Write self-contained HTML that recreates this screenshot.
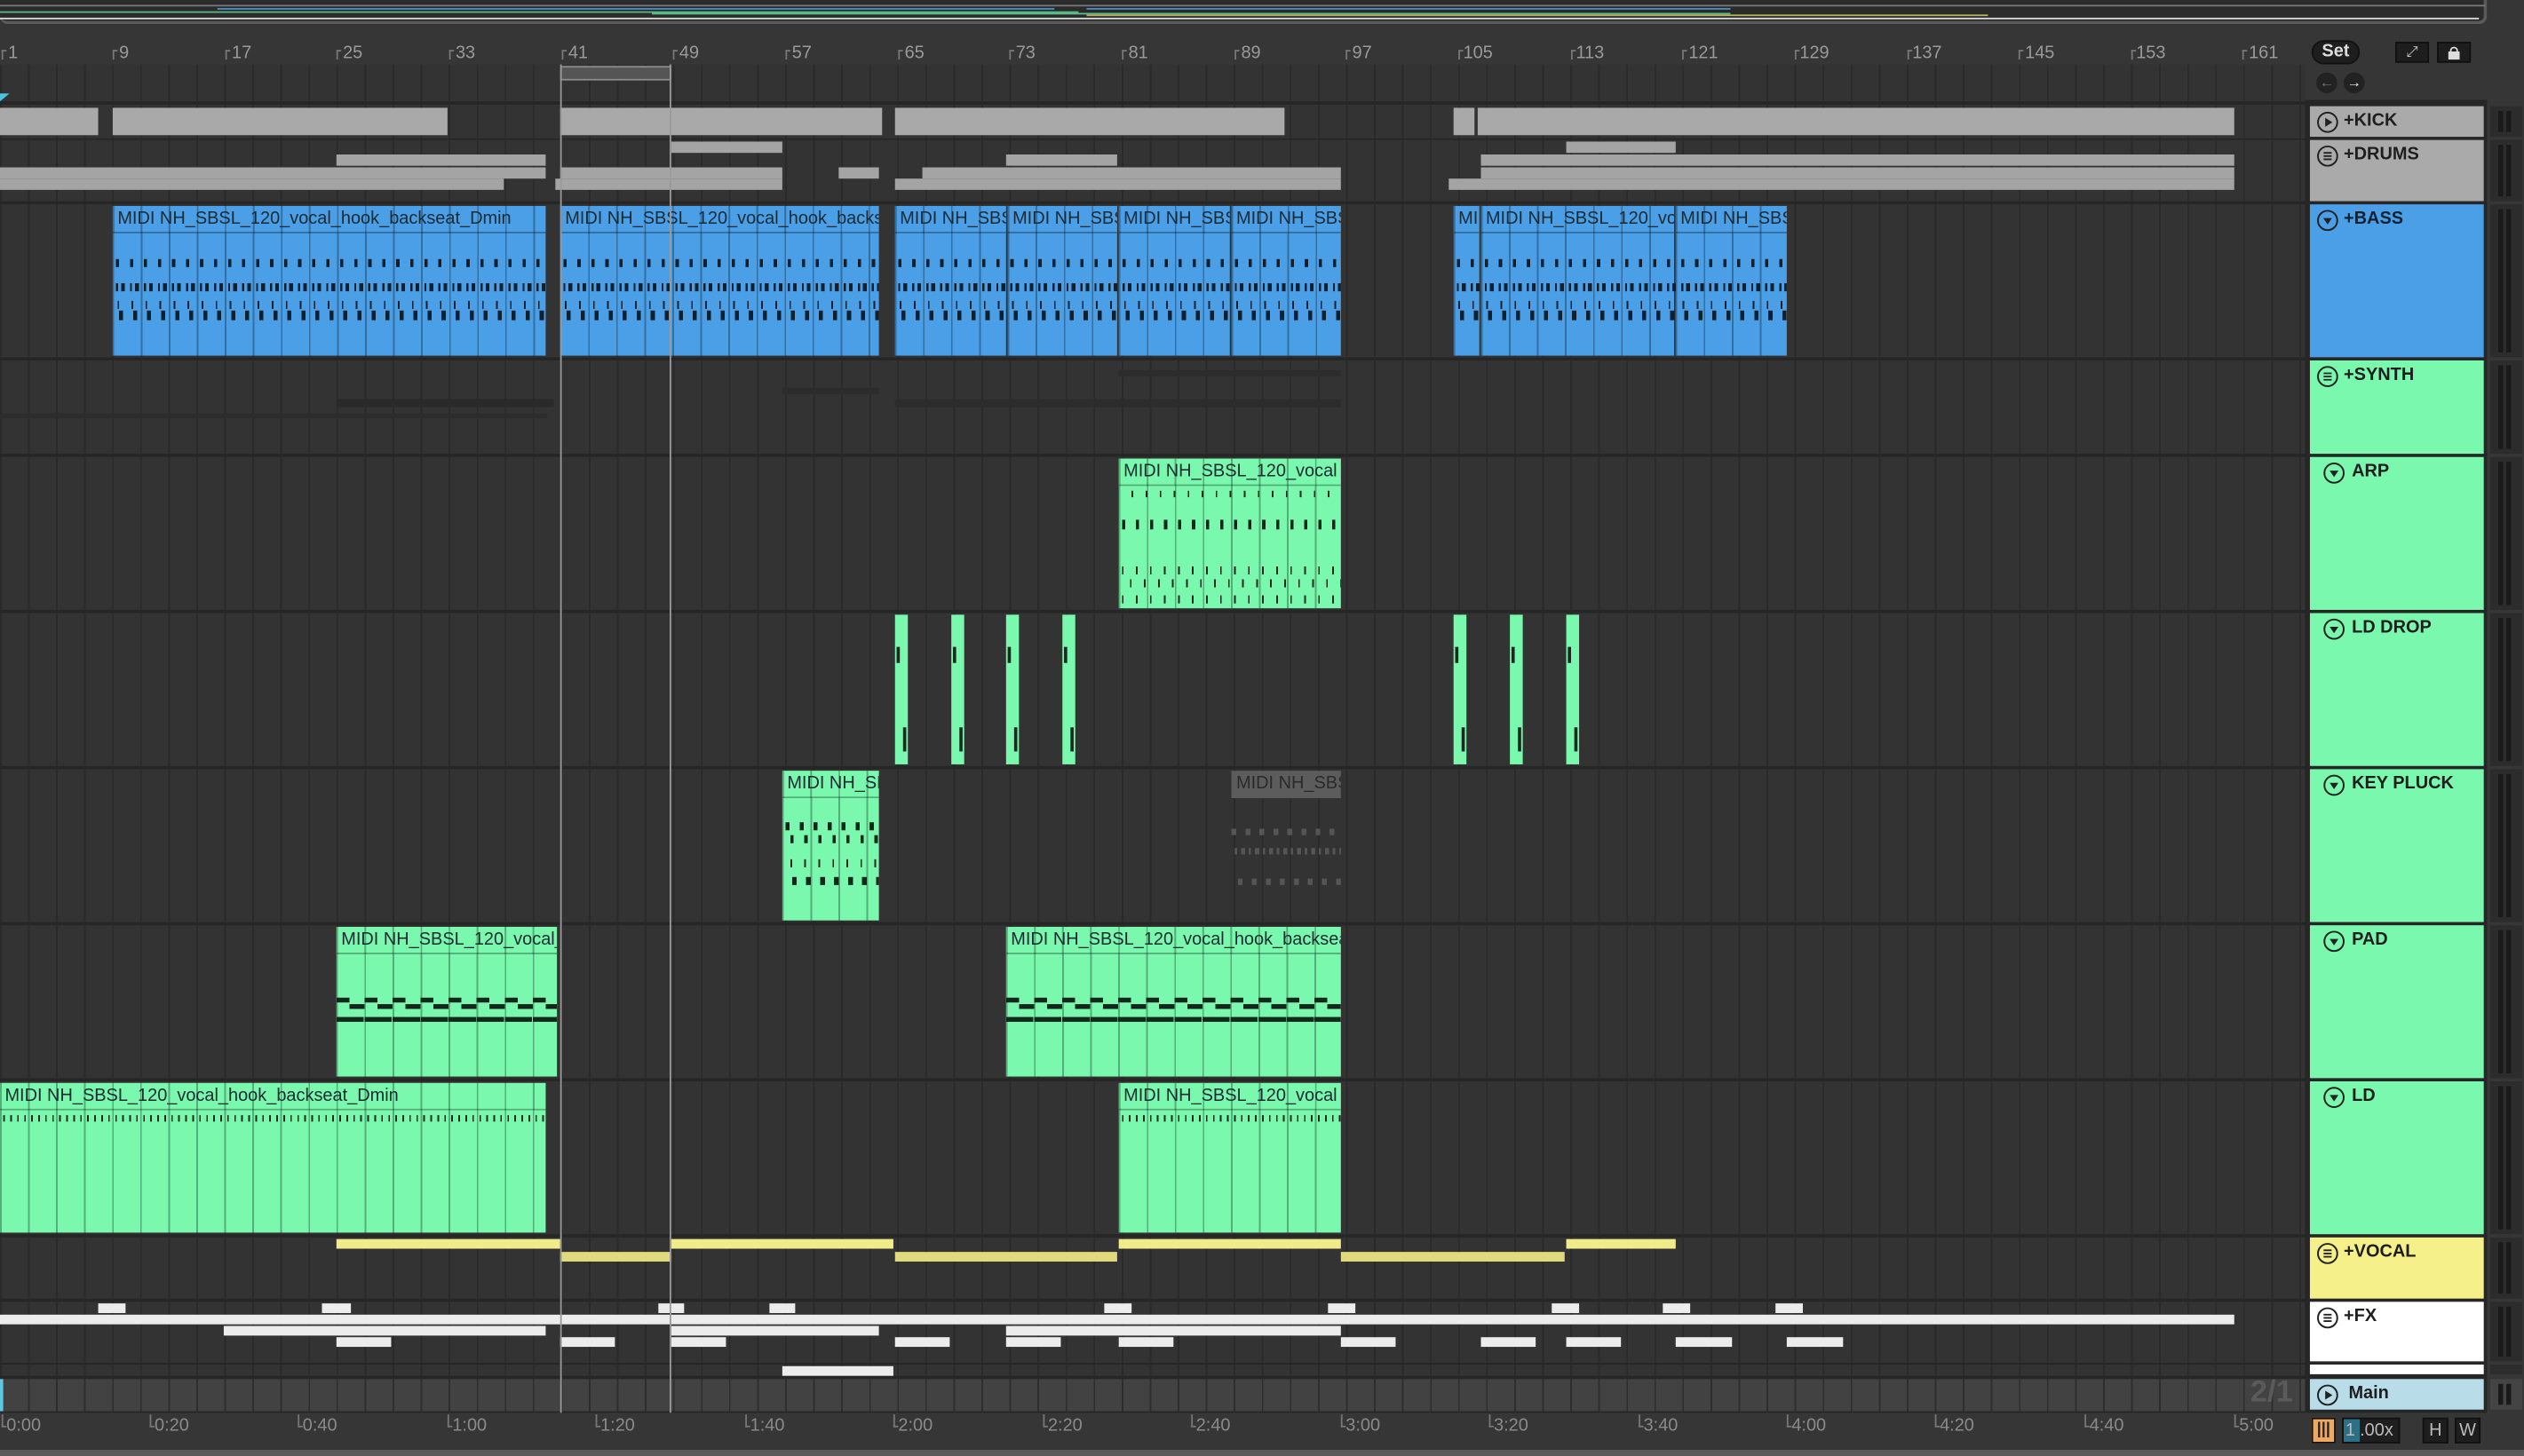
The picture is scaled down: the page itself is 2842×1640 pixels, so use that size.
<!DOCTYPE html>
<html><head><meta charset="utf-8"><style>
*{margin:0;padding:0;box-sizing:border-box}
html,body{width:2842px;height:1640px;overflow:hidden;background:#363636}
#s{position:absolute;left:0;top:0;width:1568px;height:905px;transform:scale(1.8125);transform-origin:0 0;font-family:"Liberation Sans",sans-serif;background:#363636}
.a{position:absolute}
.row{position:absolute;left:0;width:1432px;background:repeating-linear-gradient(90deg,#2a2a2a 0 1px,#333 1px 17.42px)}
.gr{position:absolute;background:#a9a9a9}
.g2{position:absolute;background:#a4a4a4;height:6.5px}
.clip{position:absolute;overflow:hidden;background-image:repeating-linear-gradient(90deg,rgba(0,0,0,.3) 0 1px,transparent 1px 17.42px)}
.b{background-color:#4a9fe6}
.gn{background-color:#7af8ad}
.t{position:absolute;left:0;top:0;right:0;height:17px;border-bottom:1px solid rgba(0,0,0,.3);font-size:11px;line-height:17px;padding-left:3px;color:#1a2a33;white-space:nowrap;overflow:hidden}
.b .t,.gn .t{background:inherit}
.nt{position:absolute;left:2px;right:0}
.rl{position:absolute;top:27px;font-size:11px;color:#9a9a9a}
.tk{position:absolute;top:31px;width:3px;height:6px;border-left:1px solid #777;border-top:1px solid #777}
.h{position:absolute;left:1435px;width:108px;font-size:11px;font-weight:bold;color:#1e1e1e}
.h svg{position:absolute;left:4px;top:3px}
.h .n{position:absolute;left:21px;top:3px}
.m{position:absolute;left:1547px;width:20px;background:#2c2c2c}
.m i{position:absolute;top:3px;bottom:3px;width:3px;background:#1a1a1a}
.y{position:absolute;background:#f1ec8a;height:6px}
.w{position:absolute;background:#ececec;height:5.5px}
.bt{position:absolute;top:880px;font-size:11px;color:#8a8a8a}
.bk{position:absolute;top:879px;width:3px;height:8px;border-left:1px solid #777;border-bottom:1px solid #777}
</style></head><body><div id="s">
<svg width="0" height="0" style="position:absolute"><defs>
<symbol id="pl" viewBox="0 0 14 14"><circle cx="7" cy="7" r="6" fill="none" stroke="#222" stroke-width="1.1"/><path d="M5.5 4.2 L10 7 L5.5 9.8Z" fill="#222"/></symbol>
<symbol id="mn" viewBox="0 0 14 14"><circle cx="7" cy="7" r="6" fill="none" stroke="#222" stroke-width="1.1"/><path d="M4.5 5h5M4.5 7h5M4.5 9h5" stroke="#222" stroke-width="1"/></symbol>
<symbol id="dn" viewBox="0 0 14 14"><circle cx="7" cy="7" r="6" fill="none" stroke="#222" stroke-width="1.1"/><path d="M4.3 5.5 L9.7 5.5 L7 9.5Z" fill="#222"/></symbol>
</defs></svg>

<!-- overview -->
<div class="a" style="left:0;top:0;width:1545px;height:15px;background:#2b2b2b;border-bottom:2px solid #5a5a5a;border-right:2px solid #5a5a5a;border-radius:0 0 5px 5px"></div>
<div class="a" style="left:0;top:3px;width:1544px;height:1px;background:#777"></div>
<div class="a" style="left:135px;top:5px;width:520px;height:1px;background:#4a8fcf"></div>
<div class="a" style="left:675px;top:5px;width:400px;height:1px;background:#4a8fcf"></div>
<div class="a" style="left:0;top:7px;width:670px;height:1px;background:#55b884"></div>
<div class="a" style="left:405px;top:8px;width:670px;height:1px;background:#55c08a"></div>
<div class="a" style="left:675px;top:9px;width:560px;height:1px;background:#b8b060"></div>
<div class="a" style="left:0;top:11px;width:1540px;height:1px;background:#ddd"></div>

<!-- ruler -->
<div class="tk" style="left:1px"></div><div class="rl" style="left:5px">1</div>
<div class="tk" style="left:70px"></div><div class="rl" style="left:74px">9</div>
<div class="tk" style="left:140px"></div><div class="rl" style="left:144px">17</div>
<div class="tk" style="left:209px"></div><div class="rl" style="left:213px">25</div>
<div class="tk" style="left:279px"></div><div class="rl" style="left:283px">33</div>
<div class="tk" style="left:349px"></div><div class="rl" style="left:353px">41</div>
<div class="tk" style="left:418px"></div><div class="rl" style="left:422px">49</div>
<div class="tk" style="left:488px"></div><div class="rl" style="left:492px">57</div>
<div class="tk" style="left:558px"></div><div class="rl" style="left:562px">65</div>
<div class="tk" style="left:627px"></div><div class="rl" style="left:631px">73</div>
<div class="tk" style="left:697px"></div><div class="rl" style="left:701px">81</div>
<div class="tk" style="left:767px"></div><div class="rl" style="left:771px">89</div>
<div class="tk" style="left:836px"></div><div class="rl" style="left:840px">97</div>
<div class="tk" style="left:906px"></div><div class="rl" style="left:909px">105</div>
<div class="tk" style="left:976px"></div><div class="rl" style="left:979px">113</div>
<div class="tk" style="left:1045px"></div><div class="rl" style="left:1049px">121</div>
<div class="tk" style="left:1115px"></div><div class="rl" style="left:1118px">129</div>
<div class="tk" style="left:1185px"></div><div class="rl" style="left:1188px">137</div>
<div class="tk" style="left:1254px"></div><div class="rl" style="left:1258px">145</div>
<div class="tk" style="left:1324px"></div><div class="rl" style="left:1327px">153</div>
<div class="tk" style="left:1393px"></div><div class="rl" style="left:1397px">161</div>

<!-- track area bg -->
<div class="a" style="left:0;top:62px;width:1545px;height:816px;background:#262626"></div>
<div class="row" style="top:40px;height:23px"></div>
<div class="a" style="left:0;top:58px;width:6px;height:5px;background:#4cc3e0;clip-path:polygon(0 0,100% 0,0 100%)"></div>
<div class="row" style="top:65px;height:21px"></div>
<div class="row" style="top:87px;height:38px"></div>
<div class="row" style="top:127px;height:95px"></div>
<div class="row" style="top:224px;height:58px"></div>
<div class="row" style="top:284px;height:95px"></div>
<div class="row" style="top:381px;height:95px"></div>
<div class="row" style="top:478px;height:95px"></div>
<div class="row" style="top:575px;height:95px"></div>
<div class="row" style="top:672px;height:95px"></div>
<div class="row" style="top:769px;height:38px"></div>
<div class="row" style="top:809px;height:38px"></div>
<div class="row" style="top:848px;height:7px"></div>
<div class="row" style="top:857px;height:20px;background:repeating-linear-gradient(90deg,#2e2e2e 0 1px,#424242 1px 17.42px)"></div>

<!-- KICK -->
<div class="gr" style="left:0;top:67px;width:61px;height:17px"></div>
<div class="gr" style="left:70px;top:67px;width:208px;height:17px"></div>
<div class="gr" style="left:348px;top:67px;width:200px;height:17px"></div>
<div class="gr" style="left:556px;top:67px;width:242px;height:17px"></div>
<div class="gr" style="left:903px;top:67px;width:13px;height:17px"></div>
<div class="gr" style="left:918px;top:67px;width:470px;height:17px"></div>
<!-- DRUMS -->
<div class="g2" style="left:417px;top:88px;width:69px"></div>
<div class="g2" style="left:973px;top:88px;width:68px"></div>
<div class="g2" style="left:209px;top:96px;width:130px"></div>
<div class="g2" style="left:625px;top:96px;width:69px"></div>
<div class="g2" style="left:920px;top:96px;width:468px"></div>
<div class="g2" style="left:0;top:104px;width:339px"></div>
<div class="g2" style="left:348px;top:104px;width:138px"></div>
<div class="g2" style="left:521px;top:104px;width:25px"></div>
<div class="g2" style="left:573px;top:104px;width:260px"></div>
<div class="g2" style="left:920px;top:104px;width:468px"></div>
<div class="g2" style="left:0;top:111px;width:313px"></div>
<div class="g2" style="left:345px;top:111px;width:141px"></div>
<div class="g2" style="left:556px;top:111px;width:277px"></div>
<div class="g2" style="left:900px;top:111px;width:488px"></div>

<!-- BASS -->
<div class="clip b" style="left:70px;top:128px;width:269px;height:93px"><div class="t">MIDI NH_SBSL_120_vocal_hook_backseat_Dmin</div></div>
<div class="clip b" style="left:348px;top:128px;width:198px;height:93px"><div class="t">MIDI NH_SBSL_120_vocal_hook_backseat_Dmin</div></div>
<div class="clip b" style="left:556px;top:128px;width:69px;height:93px"><div class="t">MIDI NH_SBSL</div></div>
<div class="clip b" style="left:626px;top:128px;width:68px;height:93px"><div class="t">MIDI NH_SBSL</div></div>
<div class="clip b" style="left:695px;top:128px;width:69px;height:93px"><div class="t">MIDI NH_SBSL</div></div>
<div class="clip b" style="left:765px;top:128px;width:68px;height:93px"><div class="t">MIDI NH_SBSL</div></div>
<div class="clip b" style="left:903px;top:128px;width:16px;height:93px"><div class="t">MIDI</div></div>
<div class="clip b" style="left:920px;top:128px;width:120px;height:93px"><div class="t">MIDI NH_SBSL_120_vocal</div></div>
<div class="clip b" style="left:1041px;top:128px;width:69px;height:93px"><div class="t">MIDI NH_SBSL</div></div>
<!-- bass notes overlay -->
<div class="a" style="left:72px;top:161px;width:267px;height:5px;background:repeating-linear-gradient(90deg,#10202c 0 2px,transparent 2px 8.71px)"></div>
<div class="a" style="left:72px;top:176px;width:267px;height:5px;background:repeating-linear-gradient(90deg,#10202c 0 1.3px,transparent 1.3px 3.2px,#10202c 3.2px 5.5px,transparent 5.5px 8.71px)"></div>
<div class="a" style="left:72px;top:187px;width:267px;height:5px;background:repeating-linear-gradient(90deg,transparent 0 1px,#10202c 1px 2px,transparent 2px 8.71px)"></div>
<div class="a" style="left:72px;top:193px;width:267px;height:6px;background:repeating-linear-gradient(90deg,transparent 0 2px,#10202c 2px 4.5px,transparent 4.5px 8.71px)"></div>
<div class="a" style="left:350px;top:161px;width:196px;height:5px;background:repeating-linear-gradient(90deg,#10202c 0 2px,transparent 2px 8.71px)"></div>
<div class="a" style="left:350px;top:176px;width:196px;height:5px;background:repeating-linear-gradient(90deg,#10202c 0 1.3px,transparent 1.3px 3.2px,#10202c 3.2px 5.5px,transparent 5.5px 8.71px)"></div>
<div class="a" style="left:350px;top:187px;width:196px;height:5px;background:repeating-linear-gradient(90deg,transparent 0 1px,#10202c 1px 2px,transparent 2px 8.71px)"></div>
<div class="a" style="left:350px;top:193px;width:196px;height:6px;background:repeating-linear-gradient(90deg,transparent 0 2px,#10202c 2px 4.5px,transparent 4.5px 8.71px)"></div>
<div class="a" style="left:558px;top:161px;width:275px;height:5px;background:repeating-linear-gradient(90deg,#10202c 0 2px,transparent 2px 8.71px)"></div>
<div class="a" style="left:558px;top:176px;width:275px;height:5px;background:repeating-linear-gradient(90deg,#10202c 0 1.3px,transparent 1.3px 3.2px,#10202c 3.2px 5.5px,transparent 5.5px 8.71px)"></div>
<div class="a" style="left:558px;top:187px;width:275px;height:5px;background:repeating-linear-gradient(90deg,transparent 0 1px,#10202c 1px 2px,transparent 2px 8.71px)"></div>
<div class="a" style="left:558px;top:193px;width:275px;height:6px;background:repeating-linear-gradient(90deg,transparent 0 2px,#10202c 2px 4.5px,transparent 4.5px 8.71px)"></div>
<div class="a" style="left:905px;top:161px;width:205px;height:5px;background:repeating-linear-gradient(90deg,#10202c 0 2px,transparent 2px 8.71px)"></div>
<div class="a" style="left:905px;top:176px;width:205px;height:5px;background:repeating-linear-gradient(90deg,#10202c 0 1.3px,transparent 1.3px 3.2px,#10202c 3.2px 5.5px,transparent 5.5px 8.71px)"></div>
<div class="a" style="left:905px;top:187px;width:205px;height:5px;background:repeating-linear-gradient(90deg,transparent 0 1px,#10202c 1px 2px,transparent 2px 8.71px)"></div>
<div class="a" style="left:905px;top:193px;width:205px;height:6px;background:repeating-linear-gradient(90deg,transparent 0 2px,#10202c 2px 4.5px,transparent 4.5px 8.71px)"></div>

<!-- SYNTH faint -->
<div class="a" style="left:209px;top:248px;width:135px;height:5px;background:#2a2a2a"></div>
<div class="a" style="left:0;top:257px;width:340px;height:3px;background:#2c2c2c"></div>
<div class="a" style="left:486px;top:241px;width:60px;height:4px;background:#2c2c2c"></div>
<div class="a" style="left:695px;top:230px;width:138px;height:4px;background:#2c2c2c"></div>
<div class="a" style="left:556px;top:248px;width:277px;height:5px;background:#2c2c2c"></div>

<!-- ARP -->
<div class="clip gn" style="left:695px;top:285px;width:138px;height:93px"><div class="t">MIDI NH_SBSL_120_vocal</div>
<div class="nt" style="top:20px;height:4px;background:repeating-linear-gradient(90deg,transparent 0 6px,#12281c 6px 7px,transparent 7px 8.71px)"></div>
<div class="nt" style="top:38px;height:6px;background:repeating-linear-gradient(90deg,#12281c 0 2px,transparent 2px 8.71px)"></div>
<div class="nt" style="top:67px;height:5px;background:repeating-linear-gradient(90deg,#12281c 0 1px,transparent 1px 8.71px)"></div>
<div class="nt" style="top:75px;height:5px;background:repeating-linear-gradient(90deg,transparent 0 5px,#12281c 5px 6px,transparent 6px 8.71px)"></div>
<div class="nt" style="top:85px;height:5px;background:repeating-linear-gradient(90deg,#12281c 0 1px,transparent 1px 8.71px)"></div></div>

<!-- LD DROP -->
<div class="clip gn" style="left:556px;top:382px;width:8px;height:93px;background-image:none"><div class="a" style="left:1px;top:20px;width:2px;height:10px;background:#1a2a20"></div><div class="a" style="left:5px;top:70px;width:2px;height:15px;background:#1a2a20"></div></div>
<div class="clip gn" style="left:591px;top:382px;width:8px;height:93px;background-image:none"><div class="a" style="left:1px;top:20px;width:2px;height:10px;background:#1a2a20"></div><div class="a" style="left:5px;top:70px;width:2px;height:15px;background:#1a2a20"></div></div>
<div class="clip gn" style="left:625px;top:382px;width:8px;height:93px;background-image:none"><div class="a" style="left:1px;top:20px;width:2px;height:10px;background:#1a2a20"></div><div class="a" style="left:5px;top:70px;width:2px;height:15px;background:#1a2a20"></div></div>
<div class="clip gn" style="left:660px;top:382px;width:8px;height:93px;background-image:none"><div class="a" style="left:1px;top:20px;width:2px;height:10px;background:#1a2a20"></div><div class="a" style="left:5px;top:70px;width:2px;height:15px;background:#1a2a20"></div></div>
<div class="clip gn" style="left:903px;top:382px;width:8px;height:93px;background-image:none"><div class="a" style="left:1px;top:20px;width:2px;height:10px;background:#1a2a20"></div><div class="a" style="left:5px;top:70px;width:2px;height:15px;background:#1a2a20"></div></div>
<div class="clip gn" style="left:938px;top:382px;width:8px;height:93px;background-image:none"><div class="a" style="left:1px;top:20px;width:2px;height:10px;background:#1a2a20"></div><div class="a" style="left:5px;top:70px;width:2px;height:15px;background:#1a2a20"></div></div>
<div class="clip gn" style="left:973px;top:382px;width:8px;height:93px;background-image:none"><div class="a" style="left:1px;top:20px;width:2px;height:10px;background:#1a2a20"></div><div class="a" style="left:5px;top:70px;width:2px;height:15px;background:#1a2a20"></div></div>

<!-- KEY PLUCK -->
<div class="clip gn" style="left:486px;top:479px;width:60px;height:93px"><div class="t">MIDI NH_SBSL</div>
<div class="nt" style="top:32px;height:5px;background:repeating-linear-gradient(90deg,#12281c 0 2.5px,transparent 2.5px 8.71px)"></div>
<div class="nt" style="top:40px;height:5px;background:repeating-linear-gradient(90deg,transparent 0 3px,#12281c 3px 5px,transparent 5px 8.71px)"></div>
<div class="nt" style="top:55px;height:5px;background:repeating-linear-gradient(90deg,transparent 0 3px,#12281c 3px 4px,transparent 4px 8.71px)"></div>
<div class="nt" style="top:66px;height:5px;background:repeating-linear-gradient(90deg,transparent 0 4px,#12281c 4px 7px,transparent 7px 8.71px)"></div></div>
<div class="a" style="left:765px;top:479px;width:68px;height:17px;background:#5c5c5c;font-size:11px;line-height:17px;padding-left:3px;color:#2a2a2a;white-space:nowrap;overflow:hidden">MIDI NH_SBSL</div>
<div class="a" style="left:765px;top:515px;width:68px;height:4px;background:repeating-linear-gradient(90deg,#555 0 3px,transparent 3px 8.71px)"></div>
<div class="a" style="left:767px;top:527px;width:66px;height:4px;background:repeating-linear-gradient(90deg,#555 0 1.5px,transparent 1.5px 4px,#555 4px 6.5px,transparent 6.5px 8.71px)"></div>
<div class="a" style="left:769px;top:546px;width:64px;height:4px;background:repeating-linear-gradient(90deg,#555 0 3px,transparent 3px 8.71px)"></div>

<!-- PAD -->
<div class="clip gn" style="left:209px;top:576px;width:137px;height:93px"><div class="t">MIDI NH_SBSL_120_vocal_hook</div>
<div class="nt" style="left:0;top:44px;height:3px;background:repeating-linear-gradient(90deg,#12281c 0 8px,transparent 8px 17.42px)"></div>
<div class="nt" style="left:0;top:48px;height:3px;background:repeating-linear-gradient(90deg,transparent 0 8px,#12281c 8px 17.42px)"></div>
<div class="nt" style="left:0;top:56px;height:2.5px;background:repeating-linear-gradient(90deg,#12281c 0 17px,transparent 17px 17.42px)"></div></div>
<div class="clip gn" style="left:625px;top:576px;width:208px;height:93px"><div class="t">MIDI NH_SBSL_120_vocal_hook_backseat</div>
<div class="nt" style="left:0;top:44px;height:3px;background:repeating-linear-gradient(90deg,#12281c 0 8px,transparent 8px 17.42px)"></div>
<div class="nt" style="left:0;top:48px;height:3px;background:repeating-linear-gradient(90deg,transparent 0 8px,#12281c 8px 17.42px)"></div>
<div class="nt" style="left:0;top:56px;height:2.5px;background:repeating-linear-gradient(90deg,#12281c 0 17px,transparent 17px 17.42px)"></div></div>

<!-- LD -->
<div class="clip gn" style="left:0;top:673px;width:339px;height:93px"><div class="t">MIDI NH_SBSL_120_vocal_hook_backseat_Dmin</div>
<div class="nt" style="top:20px;height:4px;background:repeating-linear-gradient(90deg,#12281c 0 1px,transparent 1px 4.35px)"></div></div>
<div class="clip gn" style="left:695px;top:673px;width:138px;height:93px"><div class="t">MIDI NH_SBSL_120_vocal</div>
<div class="nt" style="top:20px;height:4px;background:repeating-linear-gradient(90deg,#12281c 0 1px,transparent 1px 4.35px)"></div></div>

<!-- VOCAL -->
<div class="y" style="left:209px;top:770px;width:139px"></div>
<div class="y" style="left:417px;top:770px;width:138px"></div>
<div class="y" style="left:695px;top:770px;width:138px"></div>
<div class="y" style="left:973px;top:770px;width:68px"></div>
<div class="y" style="left:348px;top:778px;width:69px;background:#e0da7c"></div>
<div class="y" style="left:556px;top:778px;width:138px;background:#e0da7c"></div>
<div class="y" style="left:833px;top:778px;width:139px;background:#e0da7c"></div>

<!-- FX -->
<div class="w" style="left:61px;top:810px;width:17px"></div>
<div class="w" style="left:200px;top:810px;width:18px"></div>
<div class="w" style="left:409px;top:810px;width:16px"></div>
<div class="w" style="left:478px;top:810px;width:16px"></div>
<div class="w" style="left:686px;top:810px;width:17px"></div>
<div class="w" style="left:825px;top:810px;width:17px"></div>
<div class="w" style="left:964px;top:810px;width:17px"></div>
<div class="w" style="left:1033px;top:810px;width:17px"></div>
<div class="w" style="left:1103px;top:810px;width:17px"></div>
<div class="w" style="left:0;top:817px;width:1388px"></div>
<div class="w" style="left:139px;top:824px;width:200px"></div>
<div class="w" style="left:417px;top:824px;width:129px"></div>
<div class="w" style="left:625px;top:824px;width:208px"></div>
<div class="w" style="left:209px;top:831px;width:34px"></div>
<div class="w" style="left:348px;top:831px;width:34px"></div>
<div class="w" style="left:417px;top:831px;width:34px"></div>
<div class="w" style="left:556px;top:831px;width:34px"></div>
<div class="w" style="left:625px;top:831px;width:34px"></div>
<div class="w" style="left:695px;top:831px;width:34px"></div>
<div class="w" style="left:833px;top:831px;width:34px"></div>
<div class="w" style="left:920px;top:831px;width:34px"></div>
<div class="w" style="left:973px;top:831px;width:34px"></div>
<div class="w" style="left:1041px;top:831px;width:35px"></div>
<div class="w" style="left:1110px;top:831px;width:35px"></div>
<div class="w" style="left:486px;top:849px;width:69px"></div>

<!-- main row -->
<div class="a" style="left:0;top:857px;width:2px;height:20px;background:#5cc8e6"></div>
<div class="a" style="left:1398px;top:855px;font-size:19px;font-weight:bold;color:#5a5a5a">2/1</div>

<!-- loop brace + locator lines -->
<div class="a" style="left:348px;top:41px;width:69px;height:9px;background:#555;border:1px solid #8a8a8a"></div>
<div class="a" style="left:348px;top:40px;width:1px;height:838px;background:#9a9a9a"></div>
<div class="a" style="left:416px;top:40px;width:1px;height:838px;background:#9a9a9a"></div>

<!-- bottom time ruler -->
<div class="a" style="left:0;top:878px;width:1435px;height:27px;background:#363636"></div>
<div class="bt" style="left:4px">0:00</div><div class="bt" style="left:96px">0:20</div><div class="bt" style="left:188px">0:40</div><div class="bt" style="left:281px">1:00</div><div class="bt" style="left:373px">1:20</div><div class="bt" style="left:466px">1:40</div><div class="bt" style="left:558px">2:00</div><div class="bt" style="left:651px">2:20</div><div class="bt" style="left:743px">2:40</div><div class="bt" style="left:836px">3:00</div><div class="bt" style="left:928px">3:20</div><div class="bt" style="left:1021px">3:40</div><div class="bt" style="left:1113px">4:00</div><div class="bt" style="left:1205px">4:20</div><div class="bt" style="left:1298px">4:40</div><div class="bt" style="left:1391px">5:00</div>
<div class="bk" style="left:1px"></div><div class="bk" style="left:93px"></div><div class="bk" style="left:185px"></div><div class="bk" style="left:278px"></div><div class="bk" style="left:370px"></div><div class="bk" style="left:463px"></div><div class="bk" style="left:555px"></div><div class="bk" style="left:648px"></div><div class="bk" style="left:740px"></div><div class="bk" style="left:833px"></div><div class="bk" style="left:925px"></div><div class="bk" style="left:1018px"></div><div class="bk" style="left:1110px"></div><div class="bk" style="left:1202px"></div><div class="bk" style="left:1295px"></div><div class="bk" style="left:1388px"></div>
<div class="a" style="left:0;top:901px;width:1568px;height:4px;background:#5a5a5a"></div>

<!-- header controls -->
<div class="a" style="left:1436px;top:25px;width:30px;height:15px;border-radius:8px;background:#1e1e1e;border:1px solid #111;color:#ddd;font-size:11px;font-weight:bold;text-align:center;line-height:13px">Set</div>
<div class="a" style="left:1488px;top:26px;width:21px;height:13px;background:#1e1e1e;border:1px solid #111;color:#ccc;font-size:9px;text-align:center;line-height:11px">⤢</div>
<div class="a" style="left:1514px;top:26px;width:21px;height:13px;background:#1e1e1e;border:1px solid #111"><div class="a" style="left:6px;top:5px;width:7px;height:5px;background:#ddd"></div><div class="a" style="left:7px;top:2px;width:5px;height:5px;border:1px solid #ddd;border-radius:3px 3px 0 0"></div></div>
<div class="a" style="left:1439px;top:45px;width:13px;height:13px;border-radius:50%;background:#222;color:#777;font-size:9px;text-align:center;line-height:12px">←</div>
<div class="a" style="left:1456px;top:45px;width:13px;height:13px;border-radius:50%;background:#222;color:#eee;font-size:9px;text-align:center;line-height:12px">→</div>

<!-- track headers -->
<div class="h" style="top:66px;height:19px;background:#aaa"><svg width="14" height="14"><use href="#pl"/></svg><div class="n">+KICK</div></div>
<div class="h" style="top:87px;height:38px;background:#aaa"><svg width="14" height="14"><use href="#mn"/></svg><div class="n">+DRUMS</div></div>
<div class="h" style="top:127px;height:95px;background:#4a9fe6"><svg width="14" height="14"><use href="#dn"/></svg><div class="n" style="color:#112233">+BASS</div></div>
<div class="h" style="top:224px;height:58px;background:#7af8ad"><svg width="14" height="14"><use href="#mn"/></svg><div class="n">+SYNTH</div></div>
<div class="h" style="top:284px;height:95px;background:#7af8ad"><svg width="14" height="14" style="left:8px"><use href="#dn"/></svg><div class="n" style="left:26px">ARP</div></div>
<div class="h" style="top:381px;height:95px;background:#7af8ad"><svg width="14" height="14" style="left:8px"><use href="#dn"/></svg><div class="n" style="left:26px">LD DROP</div></div>
<div class="h" style="top:478px;height:95px;background:#7af8ad"><svg width="14" height="14" style="left:8px"><use href="#dn"/></svg><div class="n" style="left:26px">KEY PLUCK</div></div>
<div class="h" style="top:575px;height:95px;background:#7af8ad"><svg width="14" height="14" style="left:8px"><use href="#dn"/></svg><div class="n" style="left:26px">PAD</div></div>
<div class="h" style="top:672px;height:95px;background:#7af8ad"><svg width="14" height="14" style="left:8px"><use href="#dn"/></svg><div class="n" style="left:26px">LD</div></div>
<div class="h" style="top:769px;height:38px;background:#f5f08a"><svg width="14" height="14"><use href="#mn"/></svg><div class="n">+VOCAL</div></div>
<div class="h" style="top:809px;height:37px;background:#fff"><svg width="14" height="14"><use href="#mn"/></svg><div class="n">+FX</div></div>
<div class="h" style="top:848px;height:6px;background:#fff"></div>
<div class="h" style="top:857px;height:19px;background:#b8dde8"><svg width="14" height="14"><use href="#pl"/></svg><div class="n" style="left:24px">Main</div></div>

<!-- meters -->
<div class="m" style="top:66px;height:19px"><i style="left:5px"></i><i style="left:10px"></i></div>
<div class="m" style="top:87px;height:38px"><i style="left:5px"></i><i style="left:10px"></i></div>
<div class="m" style="top:127px;height:95px"><i style="left:5px"></i><i style="left:10px"></i></div>
<div class="m" style="top:224px;height:58px"><i style="left:5px"></i><i style="left:10px"></i></div>
<div class="m" style="top:284px;height:95px"><i style="left:5px"></i><i style="left:10px"></i></div>
<div class="m" style="top:381px;height:95px"><i style="left:5px"></i><i style="left:10px"></i></div>
<div class="m" style="top:478px;height:95px"><i style="left:5px"></i><i style="left:10px"></i></div>
<div class="m" style="top:575px;height:95px"><i style="left:5px"></i><i style="left:10px"></i></div>
<div class="m" style="top:672px;height:95px"><i style="left:5px"></i><i style="left:10px"></i></div>
<div class="m" style="top:769px;height:38px"><i style="left:5px"></i><i style="left:10px"></i></div>
<div class="m" style="top:809px;height:37px"><i style="left:5px"></i><i style="left:10px"></i></div>
<div class="m" style="top:848px;height:6px"></div>
<div class="m" style="top:857px;height:19px;background:#444"><i style="left:5px"></i><i style="left:10px"></i></div>

<!-- bottom right controls -->
<div class="a" style="left:1436px;top:881px;width:15px;height:16px;background:#f0a860;border:1px solid #111;color:#222;font-size:10px;text-align:center;line-height:14px;font-weight:bold">|||</div>
<div class="a" style="left:1455px;top:881px;width:36px;height:16px;background:#1e1e1e;border:1px solid #111;color:#bbb;font-size:11px;line-height:14px"><span style="display:inline-block;background:#2e6f88;width:10px;padding-left:1px">1</span>.00x</div>
<div class="a" style="left:1505px;top:881px;width:16px;height:16px;background:#1e1e1e;border:1px solid #111;color:#bbb;font-size:11px;text-align:center;line-height:14px">H</div>
<div class="a" style="left:1525px;top:881px;width:16px;height:16px;background:#1e1e1e;border:1px solid #111;color:#bbb;font-size:11px;text-align:center;line-height:14px">W</div>

</div></body></html>
